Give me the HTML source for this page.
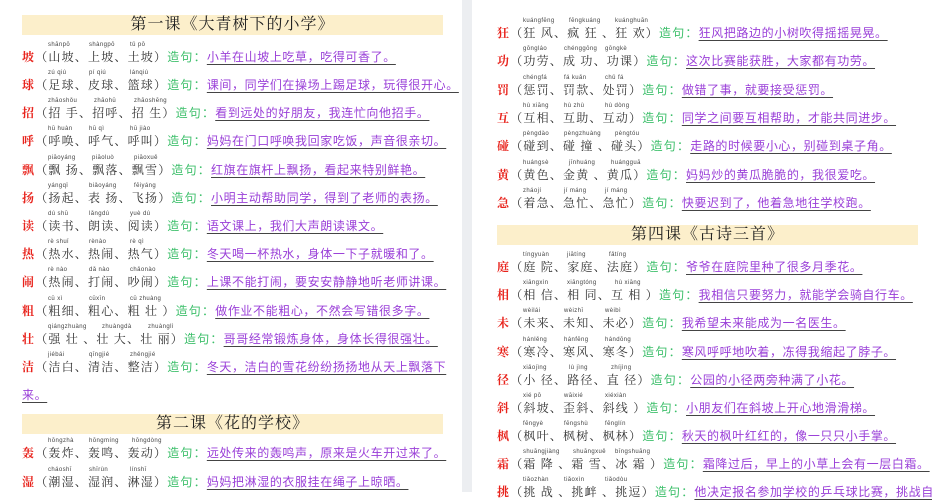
<!DOCTYPE html>
<html><head><meta charset="utf-8"><style>
body{margin:0;width:932px;height:492px;overflow:hidden;background:#fff;position:relative;font-family:"Liberation Sans","Noto Sans CJK SC",sans-serif}
.gap{position:absolute;left:462px;top:0;width:10px;height:492px;background:#eceef1}
.t{position:absolute;height:20px;background:#fcefcb;font-family:"Liberation Serif","Noto Serif CJK SC",serif;font-size:16px;line-height:20px;text-align:center;color:#222;letter-spacing:1px}
.r{position:absolute;height:28px;white-space:nowrap;font-size:12px;color:#333}
.p{position:absolute;top:0;font-size:6px;line-height:8px;color:#444;letter-spacing:0.4px}
.m{position:absolute;top:9px;left:0;line-height:14px;letter-spacing:1.2px;font-family:"Liberation Serif","Noto Serif CJK SC",serif}
.m b{color:#e8231c;font-weight:bold}
.m em{font-style:normal;color:#3cbf6a;font-family:"Liberation Sans","Noto Sans CJK SC",sans-serif}
.m u{color:#9a3fd8;text-decoration-color:#444;text-underline-offset:3px;padding-right:6px;font-family:"Liberation Sans","Noto Sans CJK SC",sans-serif;letter-spacing:0.6px}
</style></head><body>
<div class="gap"></div>
<div class="t" style="left:22px;top:15px;width:421px">第一课《大青树下的小学》</div>
<div class="t" style="left:22px;top:414px;width:421px">第二课《花的学校》</div>
<div class="t" style="left:497px;top:225px;width:421px">第四课《古诗三首》</div>

<div class="r" style="left:22px;top:41px"><span class="p" style="left:26px">shānpō</span><span class="p" style="left:67px">shàngpō</span><span class="p" style="left:108px">tǔ pō</span><div class="m"><b>坡</b>（山坡、上坡、土坡）<em>造句：</em><u>小羊在山坡上吃草，吃得可香了。</u></div></div>
<div class="r" style="left:22px;top:69px"><span class="p" style="left:26px">zú qiú</span><span class="p" style="left:67px">pí qiú</span><span class="p" style="left:108px">lánqiú</span><div class="m"><b>球</b>（足球、皮球、篮球）<em>造句：</em><u>课间，同学们在操场上踢足球，玩得很开心。</u></div></div>
<div class="r" style="left:22px;top:97px"><span class="p" style="left:26px">zhāoshǒu</span><span class="p" style="left:72px">zhāohū</span><span class="p" style="left:112px">zhāoshēng</span><div class="m"><b>招</b>（招 手、招呼、招 生）<em>造句：</em><u>看到远处的好朋友，我连忙向他招手。</u></div></div>
<div class="r" style="left:22px;top:125px"><span class="p" style="left:26px">hū huàn</span><span class="p" style="left:67px">hū qì</span><span class="p" style="left:108px">hū jiào</span><div class="m"><b>呼</b>（呼唤、呼气、呼叫）<em>造句：</em><u>妈妈在门口呼唤我回家吃饭，声音很亲切。</u></div></div>
<div class="r" style="left:22px;top:154px"><span class="p" style="left:26px">piāoyáng</span><span class="p" style="left:70px">piāoluò</span><span class="p" style="left:112px">piāoxuě</span><div class="m"><b>飘</b>（飘 扬、飘落、飘雪）<em>造句：</em><u>红旗在旗杆上飘扬，看起来特别鲜艳。</u></div></div>
<div class="r" style="left:22px;top:182px"><span class="p" style="left:26px">yángqǐ</span><span class="p" style="left:67px">biǎoyáng</span><span class="p" style="left:112px">fēiyáng</span><div class="m"><b>扬</b>（扬起、表 扬、飞扬）<em>造句：</em><u>小明主动帮助同学，得到了老师的表扬。</u></div></div>
<div class="r" style="left:22px;top:210px"><span class="p" style="left:26px">dú shū</span><span class="p" style="left:67px">lǎngdú</span><span class="p" style="left:108px">yuè dú</span><div class="m"><b>读</b>（读书、朗读、阅读）<em>造句：</em><u>语文课上，我们大声朗读课文。</u></div></div>
<div class="r" style="left:22px;top:238px"><span class="p" style="left:26px">rè shuǐ</span><span class="p" style="left:67px">rènào</span><span class="p" style="left:108px">rè qì</span><div class="m"><b>热</b>（热水、热闹、热气）<em>造句：</em><u>冬天喝一杯热水，身体一下子就暖和了。</u></div></div>
<div class="r" style="left:22px;top:266px"><span class="p" style="left:26px">rè nào</span><span class="p" style="left:67px">dǎ nào</span><span class="p" style="left:108px">chǎonào</span><div class="m"><b>闹</b>（热闹、打闹、吵闹）<em>造句：</em><u>上课不能打闹，要安安静静地听老师讲课。</u></div></div>
<div class="r" style="left:22px;top:295px"><span class="p" style="left:26px">cū xì</span><span class="p" style="left:67px">cūxīn</span><span class="p" style="left:108px">cū zhuàng</span><div class="m"><b>粗</b>（粗细、粗心、粗 壮 ）<em>造句：</em><u>做作业不能粗心，不然会写错很多字。</u></div></div>
<div class="r" style="left:22px;top:323px"><span class="p" style="left:26px">qiángzhuàng</span><span class="p" style="left:80px">zhuàngdà</span><span class="p" style="left:126px">zhuànglì</span><div class="m"><b>壮</b>（强 壮 、壮 大、壮 丽）<em>造句：</em><u>哥哥经常锻炼身体，身体长得很强壮。</u></div></div>
<div class="r" style="left:22px;top:351px"><span class="p" style="left:26px">jiébái</span><span class="p" style="left:67px">qīngjié</span><span class="p" style="left:108px">zhěngjié</span><div class="m"><b>洁</b>（洁白、清洁、整洁）<em>造句：</em><u>冬天，洁白的雪花纷纷扬扬地从天上飘落下</u></div></div>
<div class="r" style="left:22px;top:379px"><div class="m"><u>来。</u></div></div>
<div class="r" style="left:22px;top:437px"><span class="p" style="left:26px">hōngzhà</span><span class="p" style="left:67px">hōngmíng</span><span class="p" style="left:110px">hōngdòng</span><div class="m"><b>轰</b>（轰炸、轰鸣、轰动）<em>造句：</em><u>远处传来的轰鸣声，原来是火车开过来了。</u></div></div>
<div class="r" style="left:22px;top:466px"><span class="p" style="left:26px">cháoshī</span><span class="p" style="left:67px">shīrùn</span><span class="p" style="left:108px">línshī</span><div class="m"><b>湿</b>（潮湿、湿润、淋湿）<em>造句：</em><u>妈妈把淋湿的衣服挂在绳子上晾晒。</u></div></div>

<div class="r" style="left:497px;top:17px"><span class="p" style="left:26px">kuángfēng</span><span class="p" style="left:72px">fēngkuáng</span><span class="p" style="left:118px">kuánghuān</span><div class="m"><b>狂</b>（狂 风、疯 狂 、狂 欢）<em>造句：</em><u>狂风把路边的小树吹得摇摇晃晃。</u></div></div>
<div class="r" style="left:497px;top:45px"><span class="p" style="left:26px">gōngláo</span><span class="p" style="left:67px">chénggōng</span><span class="p" style="left:108px">gōngkè</span><div class="m"><b>功</b>（功劳、成 功、功课）<em>造句：</em><u>这次比赛能获胜，大家都有功劳。</u></div></div>
<div class="r" style="left:497px;top:74px"><span class="p" style="left:26px">chéngfá</span><span class="p" style="left:67px">fá kuǎn</span><span class="p" style="left:108px">chǔ fá</span><div class="m"><b>罚</b>（惩罚、罚款、处罚）<em>造句：</em><u>做错了事，就要接受惩罚。</u></div></div>
<div class="r" style="left:497px;top:102px"><span class="p" style="left:26px">hù xiāng</span><span class="p" style="left:67px">hù zhù</span><span class="p" style="left:108px">hù dòng</span><div class="m"><b>互</b>（互相、互助、互动）<em>造句：</em><u>同学之间要互相帮助，才能共同进步。</u></div></div>
<div class="r" style="left:497px;top:130px"><span class="p" style="left:26px">pèngdào</span><span class="p" style="left:67px">pèngzhuàng</span><span class="p" style="left:118px">pèngtóu</span><div class="m"><b>碰</b>（碰到、碰 撞 、碰头）<em>造句：</em><u>走路的时候要小心，别碰到桌子角。</u></div></div>
<div class="r" style="left:497px;top:159px"><span class="p" style="left:26px">huángsè</span><span class="p" style="left:72px">jīnhuáng</span><span class="p" style="left:114px">huángguā</span><div class="m"><b>黄</b>（黄色、金黄 、黄瓜）<em>造句：</em><u>妈妈炒的黄瓜脆脆的，我很爱吃。</u></div></div>
<div class="r" style="left:497px;top:187px"><span class="p" style="left:26px">zháojí</span><span class="p" style="left:67px">jí máng</span><span class="p" style="left:108px">jí máng</span><div class="m"><b>急</b>（着急、急忙、急忙）<em>造句：</em><u>快要迟到了，他着急地往学校跑。</u></div></div>
<div class="r" style="left:497px;top:251px"><span class="p" style="left:26px">tíngyuàn</span><span class="p" style="left:70px">jiātíng</span><span class="p" style="left:112px">fǎtíng</span><div class="m"><b>庭</b>（庭 院、家庭、法庭）<em>造句：</em><u>爷爷在庭院里种了很多月季花。</u></div></div>
<div class="r" style="left:497px;top:279px"><span class="p" style="left:26px">xiāngxìn</span><span class="p" style="left:70px">xiāngtóng</span><span class="p" style="left:118px">hù xiāng</span><div class="m"><b>相</b>（相 信、相 同、互 相 ）<em>造句：</em><u>我相信只要努力，就能学会骑自行车。</u></div></div>
<div class="r" style="left:497px;top:307px"><span class="p" style="left:26px">wèilái</span><span class="p" style="left:67px">wèizhī</span><span class="p" style="left:108px">wèibì</span><div class="m"><b>未</b>（未来、未知、未必）<em>造句：</em><u>我希望未来能成为一名医生。</u></div></div>
<div class="r" style="left:497px;top:336px"><span class="p" style="left:26px">hánlěng</span><span class="p" style="left:67px">hánfēng</span><span class="p" style="left:108px">hándōng</span><div class="m"><b>寒</b>（寒冷、寒风、寒冬）<em>造句：</em><u>寒风呼呼地吹着，冻得我缩起了脖子。</u></div></div>
<div class="r" style="left:497px;top:364px"><span class="p" style="left:26px">xiǎojìng</span><span class="p" style="left:72px">lù jìng</span><span class="p" style="left:114px">zhíjìng</span><div class="m"><b>径</b>（小 径、路径、直 径）<em>造句：</em><u>公园的小径两旁种满了小花。</u></div></div>
<div class="r" style="left:497px;top:392px"><span class="p" style="left:26px">xié pō</span><span class="p" style="left:67px">wāixié</span><span class="p" style="left:108px">xiéxiàn</span><div class="m"><b>斜</b>（斜坡、歪斜、斜线 ）<em>造句：</em><u>小朋友们在斜坡上开心地滑滑梯。</u></div></div>
<div class="r" style="left:497px;top:420px"><span class="p" style="left:26px">fēngyè</span><span class="p" style="left:67px">fēngshù</span><span class="p" style="left:108px">fēnglín</span><div class="m"><b>枫</b>（枫叶、枫树、枫林）<em>造句：</em><u>秋天的枫叶红红的，像一只只小手掌。</u></div></div>
<div class="r" style="left:497px;top:448px"><span class="p" style="left:26px">shuāngjiàng</span><span class="p" style="left:76px">shuāngxuě</span><span class="p" style="left:118px">bīngshuāng</span><div class="m"><b>霜</b>（霜 降 、霜 雪、冰 霜 ）<em>造句：</em><u>霜降过后，早上的小草上会有一层白霜。</u></div></div>
<div class="r" style="left:497px;top:476px"><span class="p" style="left:26px">tiǎozhàn</span><span class="p" style="left:67px">tiǎoxìn</span><span class="p" style="left:108px">tiǎodòu</span><div class="m"><b>挑</b>（挑 战 、挑衅 、挑逗）<em>造句：</em><u>他决定报名参加学校的乒乓球比赛，挑战自我。</u></div></div>
</body></html>
